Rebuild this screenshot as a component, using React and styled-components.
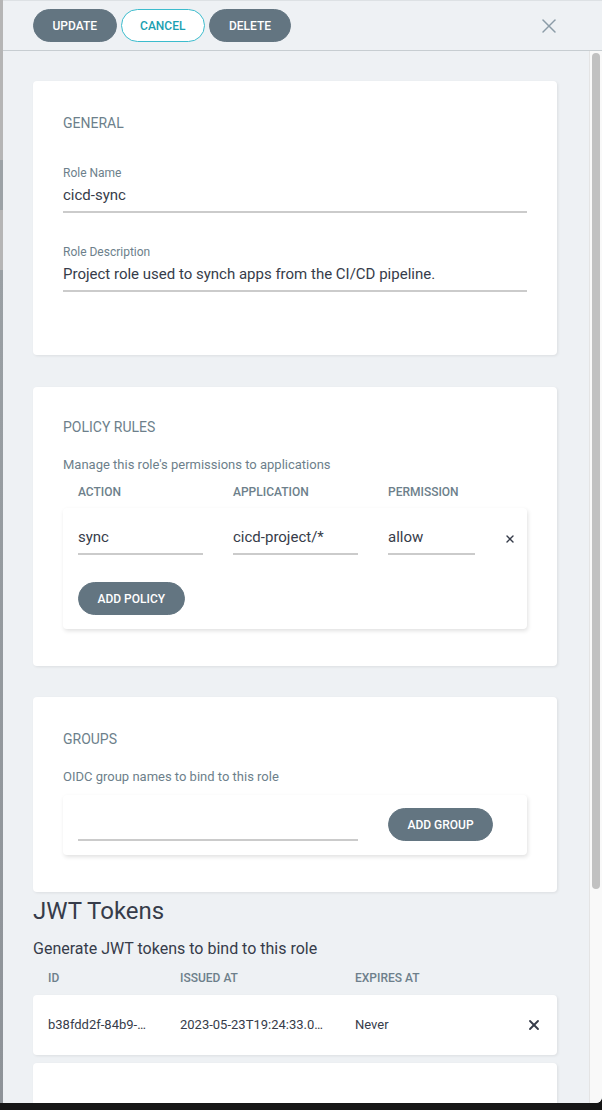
import React from 'react'
import styled, { createGlobalStyle } from 'styled-components'
import { X } from 'lucide-react'

const GlobalStyle = createGlobalStyle`
  html, body {
    margin: 0;
    padding: 0;
    height: 100%;
    overflow: hidden;
    background: #161616;
  }
  body {
    font-family: Roboto, 'Noto Sans', 'Liberation Sans', sans-serif;
    color: #363c4a;
  }
  * { box-sizing: border-box; }
`

const policies = [{ action: 'sync', application: 'cicd-project/*', permission: 'allow' }]

const tokens = [
  {
    id: 'b38fdd2f-84b9-4c6a-9f1e-2d5c7a8e1b03',
    issuedAt: '2023-05-23T19:24:33.000Z',
    expiresAt: 'Never',
  },
]

const App = () => {
  return (
    <>
      <GlobalStyle />
      <Frame>
        <Screen>
          <Backdrop />
          <Panel>
            <Header>
              <Button>Update</Button>
              <Button outline>Cancel</Button>
              <Button>Delete</Button>
              <CloseButton aria-label="close">
                <X size={24} strokeWidth={1.5} />
              </CloseButton>
            </Header>
            <Body>
              <Scroller>
                <Content>
                  <Card pad="32px 30px 63px">
                    <SectionTitle>General</SectionTitle>
                    <Field top={32}>
                      <Label>Role Name</Label>
                      <Input defaultValue="cicd-sync" />
                    </Field>
                    <Field top={31}>
                      <Label>Role Description</Label>
                      <Input defaultValue="Project role used to synch apps from the CI/CD pipeline." />
                    </Field>
                  </Card>

                  <Card pad="30px 30px 37px" top={32}>
                    <SectionTitle>Policy Rules</SectionTitle>
                    <Hint>Manage this role's permissions to applications</Hint>
                    <PolicyGrid head>
                      <ColHead>Action</ColHead>
                      <ColHead>Application</ColHead>
                      <ColHead>Permission</ColHead>
                    </PolicyGrid>
                    <InnerCard top={8} pad="15px 15px 14px">
                      {policies.map((p, i) => (
                        <PolicyGrid key={i}>
                          <Input defaultValue={p.action} w="125px" />
                          <Input defaultValue={p.application} w="125px" />
                          <Input defaultValue={p.permission} w="87px" />
                          <RemoveButton aria-label="remove">
                            <X size={12} strokeWidth={2.8} />
                          </RemoveButton>
                        </PolicyGrid>
                      ))}
                      <Button top={27}>Add Policy</Button>
                    </InnerCard>
                  </Card>

                  <Card pad="32px 30px 37px" top={31}>
                    <SectionTitle>Groups</SectionTitle>
                    <Hint>OIDC group names to bind to this role</Hint>
                    <InnerCard top={9} pad="13px 15px 14px">
                      <GroupRow>
                        <Input w="280px" />
                        <Button>Add Group</Button>
                      </GroupRow>
                    </InnerCard>
                  </Card>

                  <Heading>JWT Tokens</Heading>
                  <SubHeading>Generate JWT tokens to bind to this role</SubHeading>
                  <TokenGrid head>
                    <ColHead>ID</ColHead>
                    <ColHead>Issued At</ColHead>
                    <ColHead>Expires At</ColHead>
                  </TokenGrid>
                  {tokens.map((t) => (
                    <TokenRow key={t.id}>
                      <TokenGrid>
                        <Cell w="100px">{t.id}</Cell>
                        <Cell w="146px">{t.issuedAt}</Cell>
                        <Cell>{t.expiresAt}</Cell>
                        <RemoveButton aria-label="delete token">
                          <X size={16} strokeWidth={2.8} />
                        </RemoveButton>
                      </TokenGrid>
                    </TokenRow>
                  ))}
                  <Card pad="0" top={8} h={277} />
                </Content>
              </Scroller>
              <ScrollTrack>
                <ScrollThumb />
              </ScrollTrack>
            </Body>
          </Panel>
        </Screen>
      </Frame>
    </>
  )
}

const Frame = styled.div`
  width: 602px;
  height: 1110px;
  display: flex;
  flex-direction: column;
  background: #161616;
`

const Screen = styled.div`
  height: 1103px;
  display: flex;
  overflow: hidden;
  border-bottom-right-radius: 6px;
`

const Backdrop = styled.div`
  width: 3px;
  flex: none;
  background: linear-gradient(
    to bottom,
    #b5b5b5 0,
    #b5b5b5 160px,
    #9ca2a6 160px,
    #9ca2a6 210px,
    #b5b5b5 210px,
    #b5b5b5 270px,
    #9aa0a4 270px,
    #8e9398 100%
  );
`

const Panel = styled.div`
  flex: 1;
  min-width: 0;
  display: flex;
  flex-direction: column;
  background: #eef1f4;
`

const Header = styled.div`
  flex: none;
  height: 51px;
  display: flex;
  align-items: center;
  gap: 4px;
  padding: 0 41px 0 30px;
  border-top: 1px solid #dde1e4;
  border-bottom: 1px solid #c7cdd1;
`

const Button = styled.button`
  height: 33px;
  padding: 0 18.5px;
  margin-top: ${(p) => (p.top ? `${p.top}px` : '0')};
  border-radius: 17px;
  border: 1px solid ${(p) => (p.outline ? '#3cbccd' : '#637581')};
  background: ${(p) => (p.outline ? '#ffffff' : '#637581')};
  color: ${(p) => (p.outline ? '#1a9fb1' : '#ffffff')};
  font-family: Roboto, sans-serif;
  font-size: 12px;
  font-weight: 500;
  text-transform: uppercase;
  white-space: nowrap;
  cursor: pointer;
  min-width: 82px;
`

const CloseButton = styled.button`
  margin-left: auto;
  padding: 0;
  border: none;
  background: none;
  color: #8b9ca7;
  display: flex;
  cursor: pointer;
`

const Body = styled.div`
  flex: 1;
  min-height: 0;
  display: flex;
`

const Scroller = styled.div`
  flex: 1;
  min-width: 0;
  overflow: hidden;
`

const ScrollTrack = styled.div`
  flex: none;
  width: 13px;
  padding: 2px 2px 0 2px;
  background: #f9f9f9;
  border-left: 1px solid #e4e4e4;
`

const ScrollThumb = styled.div`
  height: 836px;
  border-radius: 4px;
  background: #c1c1c1;
`

const Content = styled.div`
  padding: 30px 32px 30px 30px;
`

const Card = styled.div`
  background: #ffffff;
  border-radius: 4px;
  box-shadow: 1px 1px 3px rgba(0, 0, 0, 0.08);
  padding: ${(p) => p.pad};
  margin-top: ${(p) => (p.top ? `${p.top}px` : '0')};
  height: ${(p) => (p.h ? `${p.h}px` : 'auto')};
`

const InnerCard = styled.div`
  background: #ffffff;
  border-radius: 4px;
  box-shadow: 1px 2px 4px rgba(0, 0, 0, 0.12);
  padding: ${(p) => p.pad};
  margin-top: ${(p) => `${p.top}px`};
`

const SectionTitle = styled.h4`
  margin: 0;
  font-size: 14px;
  line-height: 20px;
  font-weight: 400;
  color: #6d7f8b;
  text-transform: uppercase;
`

const Field = styled.div`
  margin-top: ${(p) => (p.top ? `${p.top}px` : '0')};
`

const Label = styled.div`
  font-size: 12px;
  line-height: 16px;
  color: #6d7f8b;
`

const Input = styled.input`
  display: block;
  width: ${(p) => p.w || '100%'};
  height: 32px;
  padding: 3px 0 5px;
  border: none;
  border-bottom: 2px solid #cbcbcb;
  background: transparent;
  font-family: Roboto, sans-serif;
  font-size: 15px;
  line-height: 22px;
  color: #363c4a;
  outline: none;
`

const Hint = styled.div`
  margin-top: 19px;
  font-size: 13px;
  line-height: 18px;
  color: #6d7f8b;
`

const ColHead = styled.div`
  font-size: 12px;
  line-height: 16px;
  font-weight: 500;
  color: #6d7f8b;
  text-transform: uppercase;
`

const PolicyGrid = styled.div`
  display: grid;
  grid-template-columns: 155px 155px 116px 1fr;
  align-items: center;
  padding-left: ${(p) => (p.head ? '15px' : '0')};
  margin-top: ${(p) => (p.head ? '10px' : '0')};
`

const RemoveButton = styled.button`
  justify-self: center;
  padding: 0;
  border: none;
  background: none;
  color: #363c4a;
  display: flex;
  cursor: pointer;
`

const GroupRow = styled.div`
  display: flex;
  align-items: flex-end;
  gap: 30px;
`

const Heading = styled.h2`
  margin: 5px 0 0;
  font-size: 24px;
  line-height: 29px;
  font-weight: 400;
  color: #363c4a;
`

const SubHeading = styled.div`
  margin-top: 13px;
  font-size: 16px;
  line-height: 20px;
  color: #363c4a;
`

const TokenGrid = styled.div`
  display: grid;
  grid-template-columns: 132px 175px 1fr 46px;
  align-items: center;
  padding-left: 15px;
  margin-top: ${(p) => (p.head ? '11px' : '0')};
`

const TokenRow = styled.div`
  margin-top: 9px;
  height: 60px;
  display: flex;
  align-items: center;
  background: #ffffff;
  border-radius: 4px;
  box-shadow: 1px 1px 3px rgba(0, 0, 0, 0.08);
  > * {
    flex: 1;
  }
`

const Cell = styled.div`
  width: ${(p) => p.w || 'auto'};
  font-size: 13px;
  line-height: 18px;
  color: #363c4a;
  white-space: nowrap;
  overflow: hidden;
  text-overflow: ellipsis;
`

export default App
